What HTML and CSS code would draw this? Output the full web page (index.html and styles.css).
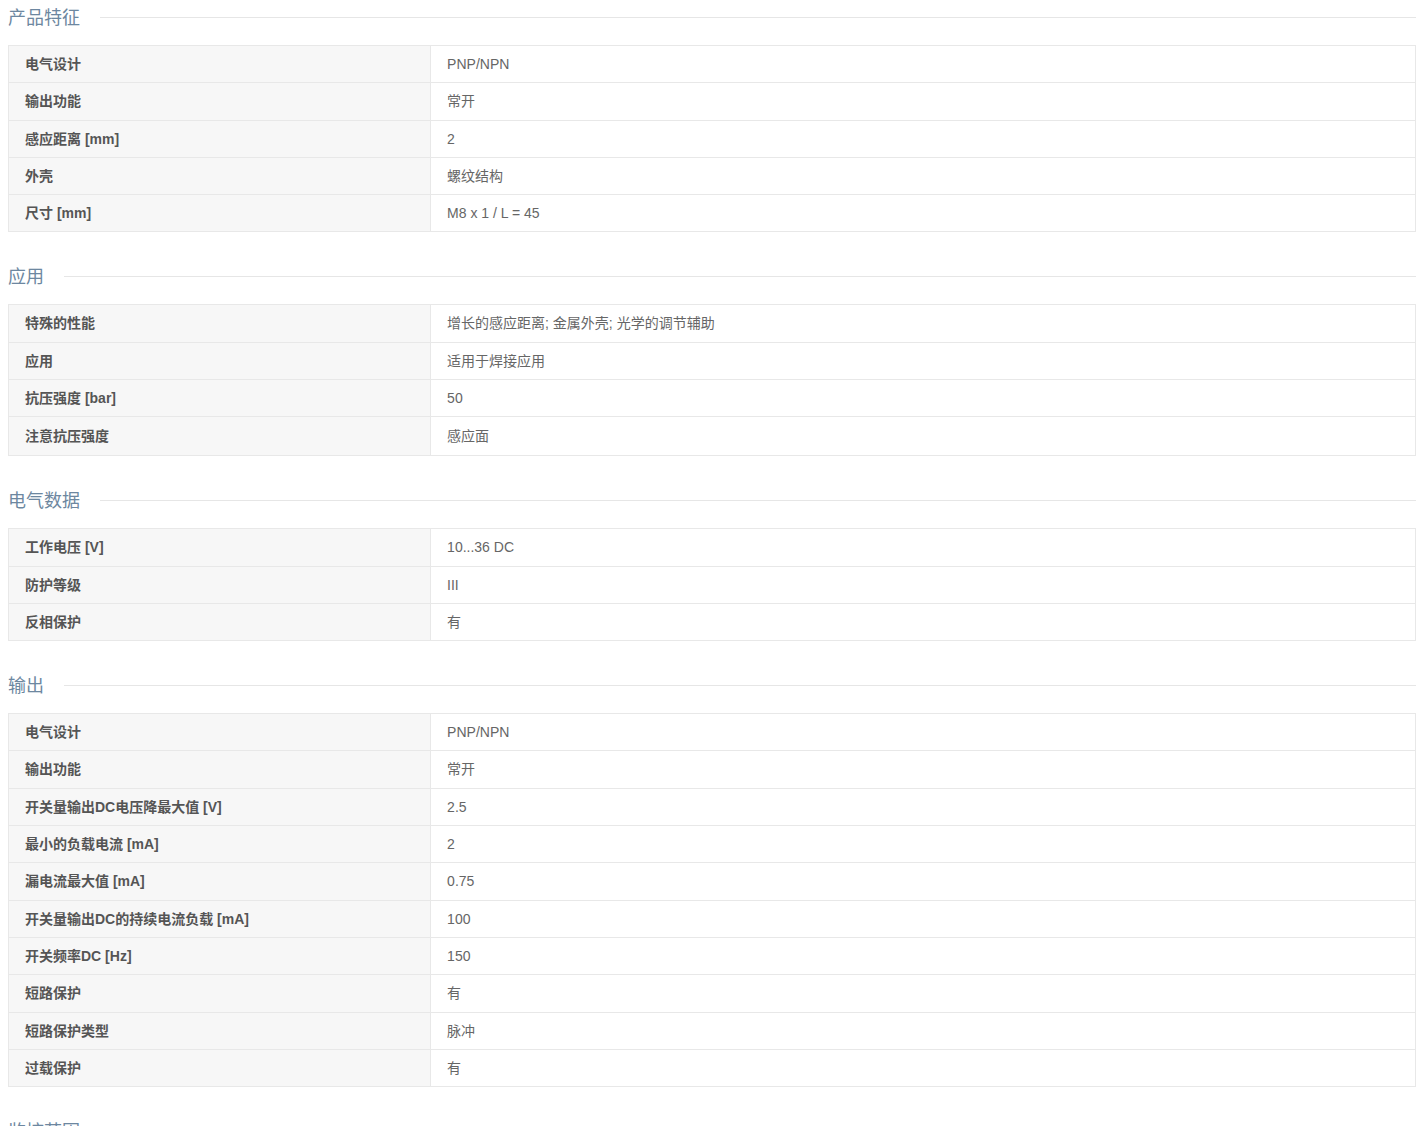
FILE: index.html
```html
<!DOCTYPE html>
<html lang="zh-CN">
<head>
<meta charset="utf-8">
<title>产品参数</title>
<link rel="stylesheet" href="styles.css">
</head>
<body>
<section class="sec">
  <h2 class="sec-title"><span>产品特征</span></h2>
  <table class="spec">
    <tr><th>电气设计</th><td>PNP/NPN</td></tr>
    <tr><th>输出功能</th><td>常开</td></tr>
    <tr><th>感应距离 [mm]</th><td>2</td></tr>
    <tr><th>外壳</th><td>螺纹结构</td></tr>
    <tr><th>尺寸 [mm]</th><td>M8 x 1 / L = 45</td></tr>
  </table>
</section>
<section class="sec">
  <h2 class="sec-title"><span>应用</span></h2>
  <table class="spec">
    <tr><th>特殊的性能</th><td>增长的感应距离; 金属外壳; 光学的调节辅助</td></tr>
    <tr><th>应用</th><td>适用于焊接应用</td></tr>
    <tr><th>抗压强度 [bar]</th><td>50</td></tr>
    <tr class="tall"><th>注意抗压强度</th><td>感应面</td></tr>
  </table>
</section>
<section class="sec">
  <h2 class="sec-title"><span>电气数据</span></h2>
  <table class="spec">
    <tr><th>工作电压 [V]</th><td>10...36 DC</td></tr>
    <tr><th>防护等级</th><td>III</td></tr>
    <tr><th>反相保护</th><td>有</td></tr>
  </table>
</section>
<section class="sec">
  <h2 class="sec-title"><span>输出</span></h2>
  <table class="spec">
    <tr><th>电气设计</th><td>PNP/NPN</td></tr>
    <tr><th>输出功能</th><td>常开</td></tr>
    <tr><th>开关量输出DC电压降最大值 [V]</th><td>2.5</td></tr>
    <tr><th>最小的负载电流 [mA]</th><td>2</td></tr>
    <tr><th>漏电流最大值 [mA]</th><td>0.75</td></tr>
    <tr><th>开关量输出DC的持续电流负载 [mA]</th><td>100</td></tr>
    <tr><th>开关频率DC [Hz]</th><td>150</td></tr>
    <tr><th>短路保护</th><td>有</td></tr>
    <tr><th>短路保护类型</th><td>脉冲</td></tr>
    <tr><th>过载保护</th><td>有</td></tr>
  </table>
</section>
<section class="sec">
  <h2 class="sec-title"><span>监控范围</span></h2>
</section>
</body>
</html>
```

FILE: styles.css
```css
html, body {
  margin: 0;
  padding: 0;
  background: #fff;
}
body {
  margin: 8px;
  font-family: "Liberation Sans", Arial, "Noto Sans CJK SC", sans-serif;
  font-size: 14px;
  color: #666;
}
.sec-title {
  display: flex;
  align-items: center;
  gap: 20px;
  margin: 0 0 19px;
  font-size: 18px;
  line-height: 18px;
  height: 18px;
  font-weight: normal;
  color: #6d87a0;
}
.sec-title span {
  position: relative;
  top: 1px;
}
.sec-title::after {
  content: "";
  flex: 1;
  height: 1px;
  background: #e6e6e6;
}
.spec {
  width: 100%;
  border-collapse: collapse;
  margin: 0 0 35px;
  table-layout: fixed;
}
.spec th,
.spec td {
  border: 1px solid #e8e8e8;
  padding: 8px 16px;
  line-height: 20.3px;
  text-align: left;
  vertical-align: middle;
}
.spec th {
  width: 30%;
  box-sizing: border-box;
  background: #f7f7f7;
  color: #555;
  font-weight: bold;
}
.spec td {
  background: #fff;
  color: #666;
}
.spec .tall th,
.spec .tall td {
  padding-top: 8.8px;
  padding-bottom: 8.8px;
}
```
